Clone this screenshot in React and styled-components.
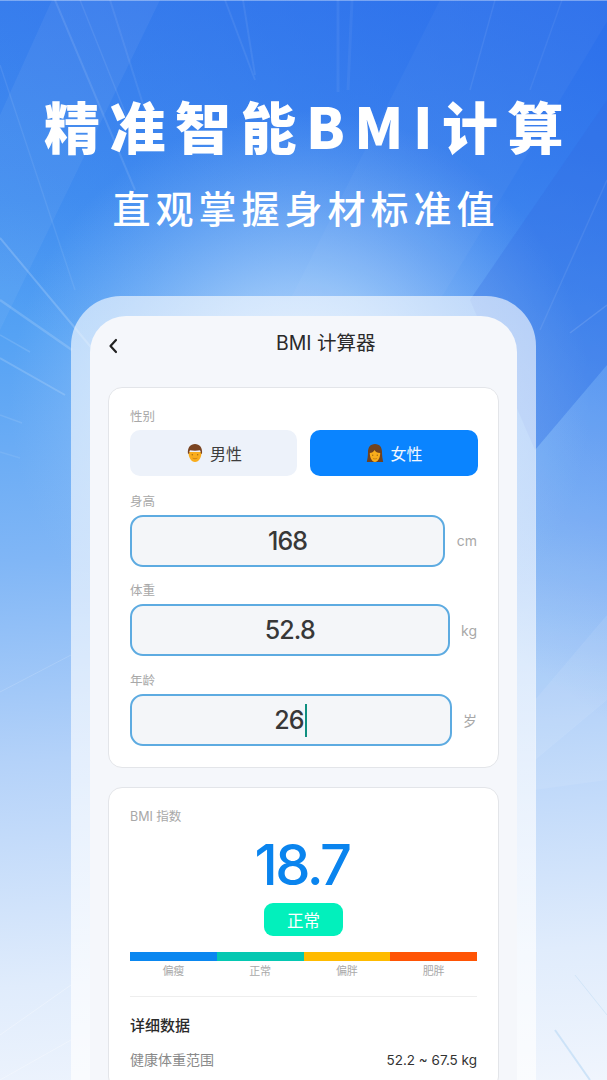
import React from "react";
import styled, { createGlobalStyle } from "styled-components";

const GlobalStyle = createGlobalStyle`
  html, body {
    margin: 0;
    padding: 0;
  }
  body {
    font-family: "Inter", "Noto Sans CJK SC", sans-serif;
  }
`;

const SCALE = [
  { label: "偏瘦", color: "#0a87f0" },
  { label: "正常", color: "#05c8b2" },
  { label: "偏胖", color: "#ffbb00" },
  { label: "肥胖", color: "#ff5405" },
];

function Backdrop() {
  return (
    <BackdropSvg viewBox="0 0 607 1080" aria-hidden="true">
      <defs>
        <radialGradient id="glow" cx="300" cy="400" r="290" gradientUnits="userSpaceOnUse">
          <stop offset="0" stopColor="#d4e8ff" stopOpacity="0.95" />
          <stop offset="0.4" stopColor="#b0d4fb" stopOpacity="0.7" />
          <stop offset="1" stopColor="#8fc0f8" stopOpacity="0" />
        </radialGradient>
      </defs>
      <rect x="0" y="0" width="607" height="1080" fill="url(#glow)" />
      <polygon points="0,115 52,0 160,0 0,330" fill="#ffffff" opacity="0.05" />
      <polygon points="607,100 607,365 535,450 470,300" fill="#3468e2" opacity="0.26" />
      <polygon points="607,365 607,700 535,760 535,450" fill="#ffffff" opacity="0.08" />
      <polygon points="290,300 440,0 620,0 440,300" fill="#ffffff" opacity="0.03" />
      <polygon points="535,700 607,615 607,780 535,790" fill="#ffffff" opacity="0.08" />
      <g stroke="#ffffff" fill="none">
        <line x1="55" y1="0" x2="135" y2="190" strokeWidth="2" opacity="0.1" />
        <line x1="80" y1="0" x2="140" y2="150" strokeWidth="1.5" opacity="0.08" />
        <line x1="110" y1="0" x2="148" y2="120" strokeWidth="2" opacity="0.07" />
        <line x1="0" y1="65" x2="75" y2="290" strokeWidth="1.5" opacity="0.08" />
        <line x1="225" y1="0" x2="255" y2="80" strokeWidth="2" opacity="0.07" />
        <line x1="243" y1="0" x2="255" y2="75" strokeWidth="2" opacity="0.07" />
        <line x1="338" y1="0" x2="338" y2="92" strokeWidth="3" opacity="0.06" />
        <line x1="352" y1="0" x2="348" y2="90" strokeWidth="3" opacity="0.05" />
        <line x1="495" y1="0" x2="470" y2="90" strokeWidth="1.5" opacity="0.07" />
        <line x1="562" y1="0" x2="530" y2="90" strokeWidth="1.5" opacity="0.06" />
        <line x1="0" y1="238" x2="95" y2="352" strokeWidth="2" opacity="0.18" />
        <line x1="607" y1="180" x2="540" y2="330" strokeWidth="1.5" opacity="0.08" />
        <line x1="0" y1="300" x2="72" y2="350" strokeWidth="2.5" opacity="0.16" />
        <line x1="0" y1="335" x2="30" y2="352" strokeWidth="1.5" opacity="0.12" />
        <line x1="0" y1="358" x2="65" y2="395" strokeWidth="2" opacity="0.16" />
        <line x1="0" y1="415" x2="22" y2="423" strokeWidth="1.5" opacity="0.1" />
        <line x1="0" y1="452" x2="20" y2="458" strokeWidth="1.5" opacity="0.08" />
        <line x1="0" y1="692" x2="71" y2="655" strokeWidth="1" opacity="0.15" />
        <line x1="0" y1="1035" x2="71" y2="985" strokeWidth="1" opacity="0.3" />
        <line x1="0" y1="1080" x2="71" y2="1040" strokeWidth="1" opacity="0.3" />
        <line x1="607" y1="305" x2="570" y2="333" strokeWidth="1.5" opacity="0.12" />
      </g>
      <g stroke="#bfdcf5" fill="none">
        <line x1="590" y1="1080" x2="555" y2="1030" strokeWidth="2" opacity="0.7" />
        <line x1="607" y1="1015" x2="575" y2="975" strokeWidth="1" opacity="0.5" />
      </g>
      <rect x="0" y="0" width="607" height="1" fill="#ffffff" opacity="0.35" />
    </BackdropSvg>
  );
}

function ManEmoji() {
  return (
    <svg width="20" height="20" viewBox="0 0 20 20" aria-hidden="true">
      <path d="M3.5 9C3.5 14.5 6 19 10 19S16.5 14.5 16.5 9Z" fill="#f9ad1c" />
      <path d="M3 11C2.2 4.5 5.5 1 10 1s7.8 3.5 7 10l-1.2-.8c0-1.300-.3-2.200-.8-2.900-3 .5-7 .5-10 0-.5.7-.8 1.600-.8 2.900Z" fill="#7a4421" />
      <circle cx="7.3" cy="11.8" r="0.7" fill="#a06a14" />
      <circle cx="12.7" cy="11.8" r="0.7" fill="#a06a14" />
      <path d="M8 15.3c1.200.6 2.800.6 4 0" stroke="#c47a12" strokeWidth="0.8" fill="none" strokeLinecap="round" />
    </svg>
  );
}

function WomanEmoji() {
  return (
    <svg width="20" height="20" viewBox="0 0 20 20" aria-hidden="true">
      <path d="M10 1C5.2 1 3 4.600 3 9c0 4-.6 7-1.200 10h16.400C17.600 16 17 13 17 9c0-4.400-2.200-8-7-8Z" fill="#70421f" />
      <path d="M4.800 10c0 4.800 2.300 9 5.200 9s5.200-4.200 5.200-9c-2.800 0-4.700-1.200-5.700-3C8.600 8.800 6.800 10 4.800 10Z" fill="#f9ad1c" />
      <circle cx="7.7" cy="12.3" r="0.7" fill="#a06a14" />
      <circle cx="12.3" cy="12.3" r="0.7" fill="#a06a14" />
      <path d="M8.300 15.600c1 .5 2.400.5 3.400 0" stroke="#c47a12" strokeWidth="0.8" fill="none" strokeLinecap="round" />
    </svg>
  );
}

export default function App() {
  return (
    <>
      <GlobalStyle />
      <Page>
        <Backdrop />
        <Hero>
          <Title>精准智能BMI计算</Title>
          <Subtitle>直观掌握身材标准值</Subtitle>
        </Hero>
        <PhoneFrame>
          <Screen>
            <NavBar>
              <BackButton aria-label="返回">
                <svg width="10" height="16" viewBox="0 0 10 16" aria-hidden="true">
                  <path d="M8 2L2.5 8L8 14" stroke="#222" strokeWidth="2.2" fill="none" strokeLinecap="round" strokeLinejoin="round" />
                </svg>
              </BackButton>
              <NavTitle>BMI 计算器</NavTitle>
            </NavBar>
            <Card>
              <FieldLabel>性别</FieldLabel>
              <GenderRow>
                <GenderButton>
                  <ManEmoji />
                  男性
                </GenderButton>
                <GenderButton $active>
                  <WomanEmoji />
                  女性
                </GenderButton>
              </GenderRow>
              <FieldLabel $spaced>身高</FieldLabel>
              <InputRow>
                <ValueBox>168</ValueBox>
                <Unit>cm</Unit>
              </InputRow>
              <FieldLabel $spaced>体重</FieldLabel>
              <InputRow>
                <ValueBox>52.8</ValueBox>
                <Unit>kg</Unit>
              </InputRow>
              <FieldLabel $spaced>年龄</FieldLabel>
              <InputRow>
                <ValueBox>
                  26
                  <Caret />
                </ValueBox>
                <Unit>岁</Unit>
              </InputRow>
            </Card>
            <ResultCard>
              <FieldLabel>BMI 指数</FieldLabel>
              <BmiValue>18.7</BmiValue>
              <BadgeRow>
                <Badge>正常</Badge>
              </BadgeRow>
              <ScaleBar>
                {SCALE.map((s) => (
                  <ScaleSegment key={s.label} $color={s.color} />
                ))}
              </ScaleBar>
              <ScaleLabels>
                {SCALE.map((s) => (
                  <span key={s.label}>{s.label}</span>
                ))}
              </ScaleLabels>
              <Divider />
              <SectionTitle>详细数据</SectionTitle>
              <DetailRow>
                <span>健康体重范围</span>
                <DetailValue>52.2 ~ 67.5 kg</DetailValue>
              </DetailRow>
            </ResultCard>
          </Screen>
        </PhoneFrame>
      </Page>
    </>
  );
}

const Page = styled.div`
  position: relative;
  width: 607px;
  height: 1080px;
  overflow: hidden;
  background: linear-gradient(
    176deg,
    #3c86ef 0%,
    #4493f1 18%,
    #55a2f4 30%,
    #80b6f6 50%,
    #b4d2f9 68%,
    #e0ecfc 88%,
    #f0f5fd 100%
  );
  &::before {
    content: "";
    position: absolute;
    inset: 0;
    background: linear-gradient(215deg, rgba(36, 100, 234, 0.7) 0%, rgba(44, 104, 232, 0.35) 25%, rgba(60, 110, 230, 0) 48%);
  }
`;

const BackdropSvg = styled.svg`
  position: absolute;
  top: 0;
  left: 0;
  width: 607px;
  height: 1080px;
`;

const Hero = styled.header`
  position: relative;
  padding-top: 89px;
  display: flex;
  flex-direction: column;
  align-items: center;
  color: #fff;
  font-family: "Noto Sans CJK SC", "Inter", sans-serif;
`;

const Title = styled.h1`
  margin: 0 -10px 0 0;
  font-size: 56px;
  line-height: 72px;
  font-weight: 900;
  letter-spacing: 9.5px;
  white-space: nowrap;
`;

const Subtitle = styled.p`
  margin: 24px -5px 0 0;
  font-size: 38px;
  line-height: 44px;
  font-weight: 500;
  letter-spacing: 5px;
  white-space: nowrap;
`;

const PhoneFrame = styled.div`
  position: relative;
  box-sizing: border-box;
  width: 465px;
  height: 784px;
  margin: 67px 0 0 71px;
  padding: 20px 19px 0 19px;
  border-radius: 50px 50px 0 0;
  background: linear-gradient(180deg, rgba(255, 255, 255, 0.6), rgba(255, 255, 255, 0.62) 40%, rgba(255, 255, 255, 0.7));
`;

const Screen = styled.div`
  box-sizing: border-box;
  height: 100%;
  padding: 0 18px;
  border-radius: 36px 36px 0 0;
  background: #f5f7fb;
  overflow: hidden;
`;

const NavBar = styled.div`
  position: relative;
  height: 54px;
  padding-left: 168px;
`;

const BackButton = styled.button`
  position: absolute;
  left: 0;
  top: 22px;
  padding: 0;
  border: 0;
  background: none;
  line-height: 0;
`;

const NavTitle = styled.div`
  font-size: 19.5px;
  line-height: 54px;
  font-weight: 400;
  color: #2a2a2a;
  white-space: nowrap;
`;

const Card = styled.section`
  box-sizing: border-box;
  height: 381px;
  margin-top: 17px;
  padding: 21px 21px 0;
  border: 1px solid #e3e5e9;
  border-radius: 14px;
  background: #fff;
`;

const ResultCard = styled(Card)`
  height: auto;
  margin-top: 19px;
  padding-bottom: 20px;
`;

const FieldLabel = styled.div`
  font-size: 12.5px;
  line-height: 16px;
  color: #a8a8a8;
  margin-top: ${(p) => (p.$spaced ? "16.7px" : "0")};
`;

const GenderRow = styled.div`
  display: grid;
  grid-template-columns: 167px 168px;
  gap: 13px;
  margin-top: 5px;
  padding-bottom: 1px;
`;

const GenderButton = styled.div`
  display: flex;
  align-items: center;
  justify-content: center;
  gap: 5px;
  height: 46px;
  border-radius: 10px;
  font-size: 16px;
  background: ${(p) => (p.$active ? "#0a84ff" : "#edf2fa")};
  color: ${(p) => (p.$active ? "#f2f8ff" : "#3d3d3d")};
`;

const InputRow = styled.div`
  display: flex;
  align-items: center;
  gap: 11.5px;
  margin-top: 5px;
`;

const ValueBox = styled.div`
  flex: 1;
  display: flex;
  align-items: center;
  justify-content: center;
  height: 52px;
  box-sizing: border-box;
  border: 2px solid #5dabe1;
  border-radius: 13px;
  background: #f4f6f9;
  font-size: 25px;
  font-weight: 500;
  letter-spacing: -0.9px;
  color: #383838;
`;

const Caret = styled.span`
  width: 2.5px;
  height: 33px;
  margin-left: 1px;
  background: #0f8f80;
`;

const Unit = styled.span`
  font-size: 14px;
  color: #a8a8a8;
`;

const BmiValue = styled.div`
  margin-top: 6px;
  padding-right: 3px;
  text-align: center;
  font-size: 56px;
  line-height: 68px;
  font-weight: 500;
  letter-spacing: -2.6px;
  color: #0a84ee;
`;

const BadgeRow = styled.div`
  display: flex;
  justify-content: center;
  margin-top: 4px;
`;

const Badge = styled.span`
  width: 79px;
  height: 33px;
  display: flex;
  align-items: center;
  justify-content: center;
  border-radius: 9px;
  background: #02f0bc;
  color: #fff;
  font-size: 16.5px;
`;

const ScaleBar = styled.div`
  display: flex;
  height: 9px;
  margin-top: 16px;
`;

const ScaleSegment = styled.div`
  flex: 1;
  background: ${(p) => p.$color};
`;

const ScaleLabels = styled.div`
  display: grid;
  grid-template-columns: repeat(4, 1fr);
  margin-top: 3px;
  font-size: 11px;
  line-height: 14px;
  text-align: center;
  color: #a9a9a9;
`;

const Divider = styled.hr`
  height: 1px;
  margin: 18px 0 0;
  border: 0;
  background: #eeeeee;
`;

const SectionTitle = styled.div`
  margin-top: 19px;
  font-size: 15px;
  line-height: 20px;
  font-weight: 500;
  color: #2a2a2a;
`;

const DetailRow = styled.div`
  display: flex;
  justify-content: space-between;
  align-items: center;
  margin-top: 14px;
  font-size: 14px;
  line-height: 20px;
  color: #8a8a8a;
`;

const DetailValue = styled.span`
  font-size: 13.5px;
  font-weight: 400;
  color: #333;
`;
